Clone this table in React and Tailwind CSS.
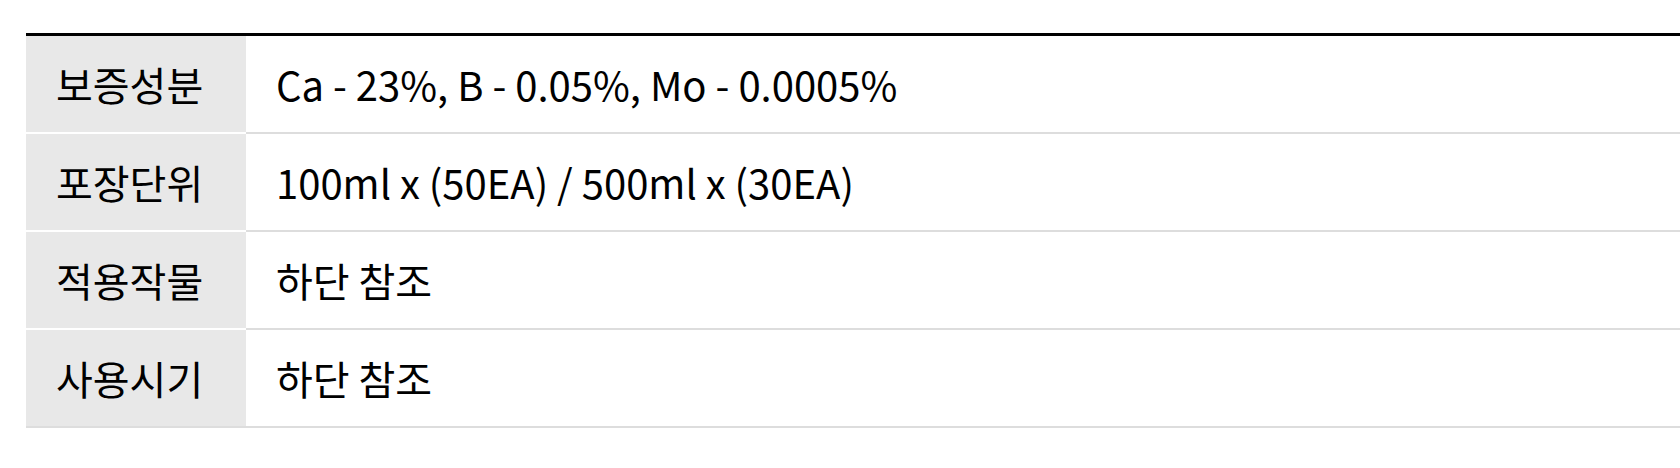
import React from "react";

const rows = [
  { label: "보증성분", value: "Ca - 23%, B - 0.05%, Mo - 0.0005%" },
  { label: "포장단위", value: "100ml x (50EA) / 500ml x (30EA)" },
  { label: "적용작물", value: "하단 참조" },
  { label: "사용시기", value: "하단 참조" },
];

export default function App() {
  return (
    <div
      className="bg-white pt-[33px] pl-[26px] h-[468px] overflow-hidden"
      style={{ fontFamily: '"Noto Sans CJK KR", "Noto Sans", sans-serif' }}
    >
      <div className="border-t-[3px] border-black border-b-2 border-b-[#dddddd] w-full">
        {rows.map((row, i) => (
          <div
            key={row.label}
            className={
              i < rows.length - 1 ? "flex h-[98px]" : "flex h-[96px]"
            }
          >
            <div
              className={
                i < rows.length - 1
                  ? "w-[220px] shrink-0 bg-[#e8e8e8] border-b-2 border-white flex items-center pl-[30px] text-[40px] text-black"
                  : "w-[220px] shrink-0 bg-[#e8e8e8] flex items-center pl-[30px] text-[40px] text-black"
              }
            >
              {row.label}
            </div>
            <div
              className={
                i < rows.length - 1
                  ? "flex-1 border-b-2 border-[#dddddd] flex items-center pl-[30px] text-[40px] text-black"
                  : "flex-1 flex items-center pl-[30px] text-[40px] text-black"
              }
            >
              {row.value}
            </div>
          </div>
        ))}
      </div>
    </div>
  );
}
